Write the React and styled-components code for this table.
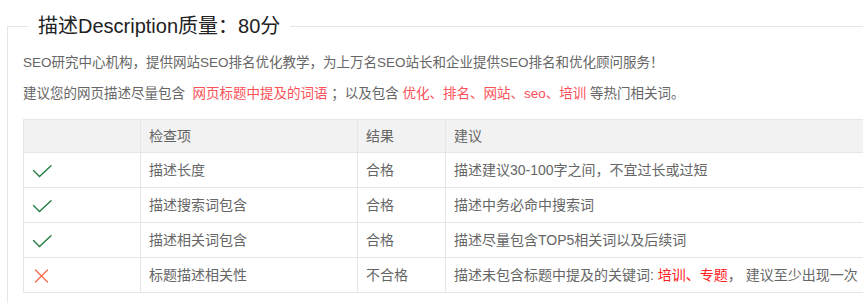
import React from 'react';
import styled, { createGlobalStyle } from 'styled-components';

const GlobalStyle = createGlobalStyle`
    html, body {
        margin: 0;
        padding: 0;
        background: #fff;
        overflow: hidden;
    }
    body {
        font-family: "Liberation Sans", "Noto Sans CJK SC", sans-serif;
        color: #666;
    }
`

const Page = styled.div`
    padding: 11px 0 0 7px;
`

const Field = styled.fieldset`
    margin: 0;
    width: 900px;
    padding: 12px 15px 20px 15px;
    border: 1px solid #e6e6e6;
    box-sizing: border-box;
`

const Legend = styled.legend`
    margin-left: 5px;
    padding: 0 10px;
    font-size: 20px;
    line-height: 30px;
    color: #222;
    font-weight: 400;
`

const Intro = styled.p`
    margin: 0 0 11px 0;
    font-size: 13.5px;
    line-height: 20px;
    color: #666;
    white-space: pre;
`

const Hot = styled.span`
    color: ${props => props.strong ? '#ff2020' : '#fb5158'};
`

const Table = styled.table`
    margin-top: 15px;
    width: 100%;
    border-collapse: collapse;
    table-layout: fixed;
    font-size: 14px;
    color: #666;
`

const Th = styled.th`
    background: #f2f2f2;
    border: 1px solid #e6e6e6;
    padding: 6px 8px;
    line-height: 20px;
    font-weight: 400;
    text-align: left;
`

const Td = styled.td`
    border: 1px solid #e6e6e6;
    padding: 7px 8px;
    line-height: 20px;
    white-space: nowrap;
`

const Mark = styled.svg`
    display: block;
    margin: 2px 0 0 ${props => props.shift || 0}px;
    fill: none;
    stroke-width: 1.3;
    stroke-linecap: round;
`

const Ok = () => (
    <Mark width="20" height="13" viewBox="0 0 20 13" stroke="#1f7a3e">
        <polyline points="1.5,5.5 7.5,11.5 19,0.8" />
    </Mark>
)

const Fail = () => (
    <Mark width="15" height="14" viewBox="0 0 15 14" stroke="#ff6a4a" shift={2}>
        <line x1="1.5" y1="1" x2="13.5" y2="13" />
        <line x1="13.5" y1="1" x2="1.5" y2="13" />
    </Mark>
)

const rows = [
    { ok: true, name: '描述长度', result: '合格', tip: '描述建议30-100字之间，不宜过长或过短' },
    { ok: true, name: '描述搜索词包含', result: '合格', tip: '描述中务必命中搜索词' },
    { ok: true, name: '描述相关词包含', result: '合格', tip: '描述尽量包含TOP5相关词以及后续词' },
    {
        ok: false, name: '标题描述相关性', result: '不合格',
        tip: <>描述未包含标题中提及的关键词: <Hot strong>培训、专题</Hot>， 建议至少出现一次</>
    },
]

const App = () => {
    return (
        <>
            <GlobalStyle />
            <Page>
                <Field>
                    <Legend>描述Description质量：80分</Legend>
                    <Intro>SEO研究中心机构，提供网站SEO排名优化教学，为上万名SEO站长和企业提供SEO排名和优化顾问服务！</Intro>
                    <Intro>
                        建议您的网页描述尽量包含  <Hot>网页标题中提及的词语</Hot> ；以及包含 <Hot>优化、排名、网站、seo、培训</Hot> 等热门相关词。
                    </Intro>
                    <Table>
                        <colgroup>
                            <col style={{ width: 117 }} />
                            <col style={{ width: 217 }} />
                            <col style={{ width: 88 }} />
                            <col />
                        </colgroup>
                        <thead>
                            <tr>
                                <Th></Th>
                                <Th>检查项</Th>
                                <Th>结果</Th>
                                <Th>建议</Th>
                            </tr>
                        </thead>
                        <tbody>
                            {rows.map((row) => (
                                <tr key={row.name}>
                                    <Td>{row.ok ? <Ok /> : <Fail />}</Td>
                                    <Td>{row.name}</Td>
                                    <Td>{row.result}</Td>
                                    <Td>{row.tip}</Td>
                                </tr>
                            ))}
                        </tbody>
                    </Table>
                </Field>
            </Page>
        </>
    );
}

export default App;
